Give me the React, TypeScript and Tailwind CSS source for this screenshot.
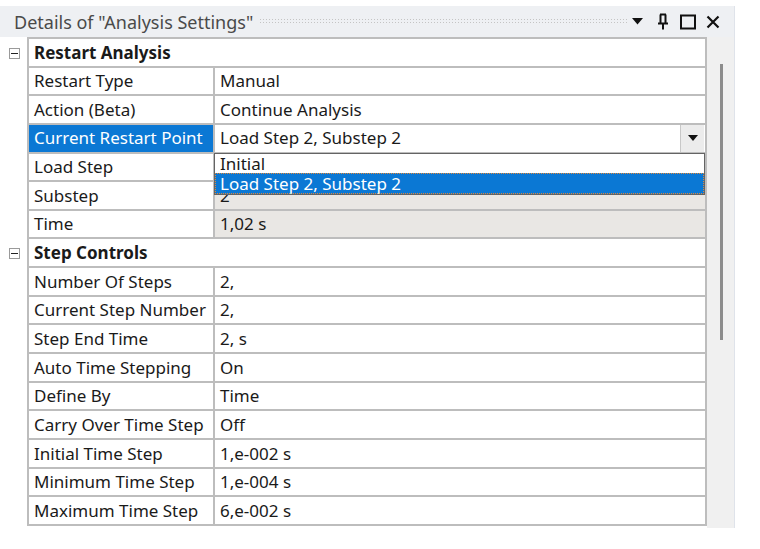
import React from "react";

type Row =
  | { kind: "group"; label: string }
  | { kind: "prop"; label: string; value: string; disabled?: boolean; special?: "restart" | "substep" };

const rows: Row[] = [
  { kind: "group", label: "Restart Analysis" },
  { kind: "prop", label: "Restart Type", value: "Manual" },
  { kind: "prop", label: "Action (Beta)", value: "Continue Analysis" },
  { kind: "prop", label: "Current Restart Point", value: "Load Step 2, Substep 2", special: "restart" },
  { kind: "prop", label: "Load Step", value: "2", disabled: true },
  { kind: "prop", label: "Substep", value: "2", disabled: true, special: "substep" },
  { kind: "prop", label: "Time", value: "1,02 s", disabled: true },
  { kind: "group", label: "Step Controls" },
  { kind: "prop", label: "Number Of Steps", value: "2," },
  { kind: "prop", label: "Current Step Number", value: "2," },
  { kind: "prop", label: "Step End Time", value: "2, s" },
  { kind: "prop", label: "Auto Time Stepping", value: "On" },
  { kind: "prop", label: "Define By", value: "Time" },
  { kind: "prop", label: "Carry Over Time Step", value: "Off" },
  { kind: "prop", label: "Initial Time Step", value: "1,e-002 s" },
  { kind: "prop", label: "Minimum Time Step", value: "1,e-004 s" },
  { kind: "prop", label: "Maximum Time Step", value: "6,e-002 s" },
];

function MinusBox() {
  return (
    <div className="w-[11px] h-[11px] border border-[#9a9a9a] bg-white flex items-center justify-center">
      <div className="w-[7px] h-[1px] bg-[#222]" />
    </div>
  );
}

export default function App() {
  return (
    <div
      className="w-[760px] h-[549px] bg-white pt-[6px] text-[17px] text-[#1a1a1a]"
      style={{ fontFamily: '"Noto Sans", "Open Sans", sans-serif' }}
    >
      <div className="w-[735px] flex flex-col">
        {/* title bar */}
        <div className="h-[31px] bg-[#eef0f3] flex items-center pl-[14px] pr-[14px] border-r border-[#dfe3ea]">
          <span className="text-[#4a4a4a] whitespace-nowrap leading-none text-[18px]">Details of "Analysis Settings"</span>
          <div className="flex-1 ml-[6px] mr-[4px] h-[7px] bg-[radial-gradient(circle,#c4c4c4_0.8px,transparent_1px)] bg-[length:3px_3px]" />
          <div className="flex items-center">
            <svg width="11" height="7" viewBox="0 0 11 7">
              <path d="M0 0 H11 L5.5 6.5 Z" fill="#111" />
            </svg>
            <svg width="12" height="17" viewBox="0 0 12 17" className="ml-[14px]">
              <path d="M3 1.5 H9 M3.5 1.5 V10 M8.5 1.5 V10 M1 10.5 H11 M6 10.5 V16.5" stroke="#111" strokeWidth="2" fill="none" />
            </svg>
            <svg width="16" height="16" viewBox="0 0 16 16" className="ml-[11px]">
              <rect x="1" y="1.5" width="14" height="13" stroke="#111" strokeWidth="2" fill="none" />
            </svg>
            <svg width="14" height="14" viewBox="0 0 14 14" className="ml-[10px]">
              <path d="M1.5 1.5 L12.5 12.5 M12.5 1.5 L1.5 12.5" stroke="#111" strokeWidth="2.2" fill="none" />
            </svg>
          </div>
        </div>
        {/* body */}
        <div className="flex h-[491px]">
          <div className="w-[707px] flex flex-col overflow-hidden">
            <div className="ml-[27px] border-t-2 border-[#bdbdbd]" />
            {rows.map((r, i) => (
              <div key={i} className="flex h-[28.65px] shrink-0">
                <div className="w-[27px] flex items-center justify-start pl-[9px]">
                  {r.kind === "group" ? <MinusBox /> : null}
                </div>
                <div className="flex-1 flex border-l-2 border-r-2 border-b-2 border-[#bdbdbd] bg-white">
                  {r.kind === "group" ? (
                    <div className="flex items-center pl-[5px] font-bold">{r.label}</div>
                  ) : (
                    <>
                      <div
                        className={
                          "w-[186px] shrink-0 flex items-center pl-[5px] border-r-2 border-[#bdbdbd] whitespace-nowrap " +
                          (r.special === "restart" ? "bg-[#0b78d4] text-white" : "")
                        }
                      >
                        {r.label}
                      </div>
                      <div
                        className={
                          "flex-1 relative flex items-center pl-[5px] whitespace-nowrap " +
                          (r.disabled ? "bg-[#e9e7e4]" : "")
                        }
                      >
                        {r.value}
                        {r.special === "restart" ? (
                          <>
                            <div className="absolute right-[1px] top-0 bottom-0 w-[24px] bg-[#ececec] border-l border-[#c8c8c8] flex items-center justify-center">
                              <svg width="10" height="6" viewBox="0 0 10 6">
                                <path d="M0 0 H10 L5 6 Z" fill="#111" />
                              </svg>
                            </div>
                            <div className="absolute left-[-1px] right-[0px] top-[100%] z-10 mt-[1px] bg-white border border-[#646464] flex flex-col">
                              <div className="h-[19px] flex items-center pl-[5px] leading-none">Initial</div>
                              <div className="h-[21px] flex items-center pl-[4px] bg-[#0b78d4] text-white border border-dotted border-[#e0883a] leading-none">
                                Load Step 2, Substep 2
                              </div>
                            </div>
                          </>
                        ) : null}
                      </div>
                    </>
                  )}
                </div>
              </div>
            ))}
          </div>
          {/* scrollbar */}
          <div className="w-[28px] bg-[#f0f0f0] border-r border-[#dfe3ea] pl-[13px] pt-[27px]">
            <div className="w-[3px] h-[276px] bg-[#8c8c8c]" />
          </div>
        </div>
      </div>
    </div>
  );
}
